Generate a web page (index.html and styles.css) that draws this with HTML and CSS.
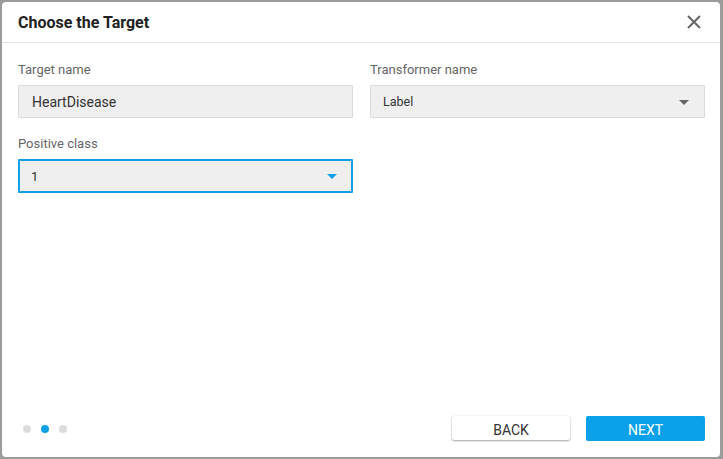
FILE: index.html
```html
<!DOCTYPE html>
<html lang="en">
<head>
<meta charset="utf-8">
<title>Choose the Target</title>
<link rel="stylesheet" href="styles.css">
</head>
<body>
<div class="dialog">
  <header class="dialog-header">
    <h1 class="title">Choose the Target</h1>
    <button class="close" aria-label="Close">
      <svg width="14" height="14" viewBox="0 0 14 14"><path d="M1 1 L13 13 M13 1 L1 13" stroke="#666" stroke-width="2" fill="none"/></svg>
    </button>
  </header>
  <main class="dialog-body">
    <div class="field">
      <div class="label">Target name</div>
      <div class="input">HeartDisease</div>
    </div>
    <div class="field">
      <div class="label">Transformer name</div>
      <div class="select small"><span>Label</span><span class="caret"></span></div>
    </div>
    <div class="field">
      <div class="label">Positive class</div>
      <div class="select focused"><span>1</span><span class="caret"></span></div>
    </div>
  </main>
  <footer class="dialog-footer">
    <div class="dots">
      <span class="dot"></span><span class="dot active"></span><span class="dot"></span>
    </div>
    <div class="actions">
      <button class="btn btn-back">BACK</button>
      <button class="btn btn-next">NEXT</button>
    </div>
  </footer>
</div>
</body>
</html>
```
FILE: styles.css
```css
html, body {
  margin: 0;
  padding: 0;
  height: 100%;
}
body {
  background: #9b9b9b;
  font-family: Roboto, "Liberation Sans", Arial, sans-serif;
  padding: 2px 0 0 2px;
  box-sizing: border-box;
}
.dialog {
  width: 718px;
  height: 455px;
  background: #fff;
  border-radius: 4px;
  display: flex;
  flex-direction: column;
  box-sizing: border-box;
}
.dialog-header {
  height: 40px;
  border-bottom: 1px solid #e3e3e3;
  display: flex;
  align-items: center;
  justify-content: space-between;
  padding: 0 19px 0 16px;
  flex: none;
}
.title {
  margin: 0;
  font-size: 16px;
  font-weight: 700;
  color: #222;
}
.close {
  background: none;
  border: 0;
  padding: 0;
  width: 14px;
  height: 14px;
  display: flex;
  cursor: pointer;
}
.dialog-body {
  flex: 1;
  display: grid;
  grid-template-columns: 335px 335px;
  column-gap: 17px;
  row-gap: 18px;
  align-content: start;
  padding: 19px 15px 0 16px;
}
.field {
  display: flex;
  flex-direction: column;
}
.label {
  font-size: 13px;
  color: #666;
  line-height: 16px;
  margin-bottom: 7px;
}
.input, .select {
  height: 33px;
  box-sizing: border-box;
  background: #efefef;
  border: 1px solid #dcdcdc;
  border-radius: 1px;
  display: flex;
  align-items: center;
  padding: 0 13px;
  font-size: 14px;
  color: #333;
}
.select {
  justify-content: space-between;
  padding-right: 15px;
}
.select.small {
  font-size: 12.5px;
  padding-left: 12px;
}
.caret {
  width: 0;
  height: 0;
  border-left: 5.5px solid transparent;
  border-right: 5.5px solid transparent;
  border-top: 5.5px solid #666;
  margin-top: 1px;
}
.select.focused {
  height: 34px;
  border: 2px solid #119fe6;
  padding-left: 11px;
  padding-right: 14px;
  font-size: 13px;
}
.select.focused .caret {
  border-top-color: #119fe6;
}
.dialog-footer {
  flex: none;
  display: flex;
  align-items: center;
  justify-content: space-between;
  padding: 0 15px 16px 21px;
  height: 42px;
  box-sizing: border-box;
}
.dots {
  display: flex;
  gap: 10px;
  padding-top: 1px;
}
.dot {
  width: 8px;
  height: 8px;
  border-radius: 50%;
  background: #dcdcdc;
}
.dot.active {
  background: #0ca0ea;
}
.actions {
  display: flex;
  gap: 16px;
  align-items: center;
}
.btn {
  width: 119px;
  height: 25px;
  border: 0;
  border-radius: 2px;
  font-family: Roboto, "Liberation Sans", Arial, sans-serif;
  font-size: 14px;
  padding: 3px 0 0;
  cursor: pointer;
}
.btn-back {
  background: #fff;
  color: #333;
  width: 118px;
  height: 24px;
  box-shadow: 0 1px 2px rgba(0,0,0,0.35), 0 0 1px rgba(0,0,0,0.2);
}
.btn-next {
  background: #0aa0ea;
  color: #fff;
}
```
